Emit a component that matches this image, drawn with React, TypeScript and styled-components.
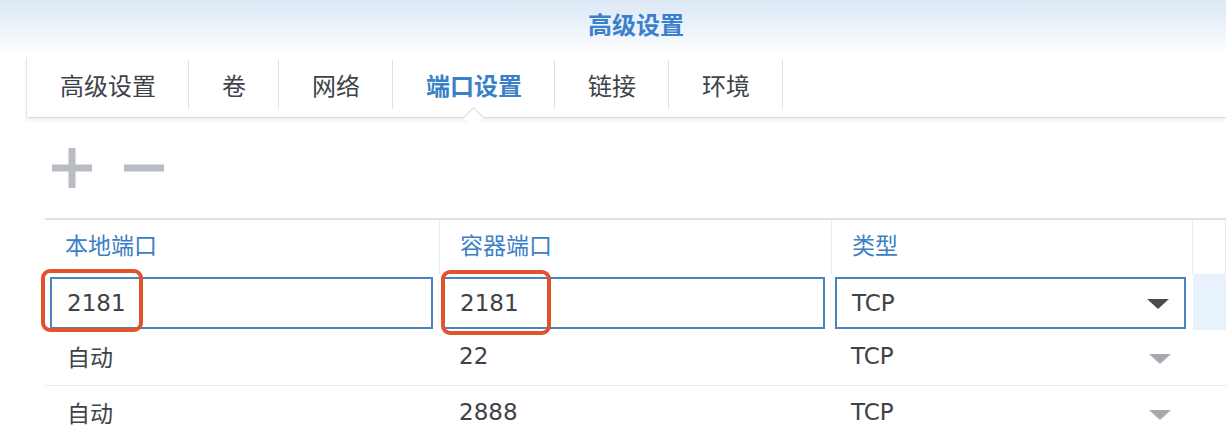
import styled, { createGlobalStyle } from "styled-components";

const GlobalStyle = createGlobalStyle`
  html, body {
    margin: 0;
    padding: 0;
    background: #ffffff;
    overflow: hidden;
  }
  body {
    font-family: "DejaVu Sans", "Noto Sans CJK SC", sans-serif;
    color: #3e4349;
  }
`;

const tabs = ["高级设置", "卷", "网络", "端口设置", "链接", "环境"];

const rows = [
  { local: "自动", container: "22", type: "TCP" },
  { local: "自动", container: "2888", type: "TCP" },
];

const App = () => {
  return (
    <>
      <GlobalStyle />
      <Window>
        <TitleBar>
          <Title>高级设置</Title>
        </TitleBar>

        <Content>
          <TabBar>
            {tabs.map((t) => (
              <Tab key={t} $active={t === "端口设置"}>
                {t}
              </Tab>
            ))}
          </TabBar>

          <Toolbar>
            <ToolButton aria-label="add">
              <svg width="40" height="40" viewBox="0 0 40 40">
                <rect x="0" y="16.5" width="40" height="7" fill="#b8bdc3" />
                <rect x="16.5" y="0" width="7" height="40" fill="#b8bdc3" />
              </svg>
            </ToolButton>
            <ToolButton aria-label="remove">
              <svg width="40" height="40" viewBox="0 0 40 40">
                <rect x="0" y="16.5" width="40" height="7" fill="#b8bdc3" />
              </svg>
            </ToolButton>
          </Toolbar>

          <Table>
            <HeadCell>本地端口</HeadCell>
            <HeadCell>容器端口</HeadCell>
            <HeadCell>类型</HeadCell>
            <HeadCell />

            <EditCell $first>
              <Field>2181</Field>
              <Mark style={{ left: -4, top: -5, width: 102, height: 63 }} />
            </EditCell>
            <EditCell>
              <Field>2181</Field>
              <Mark style={{ left: 1, top: -4, width: 110, height: 65 }} />
            </EditCell>
            <EditCell>
              <Field>
                TCP
                <Arrow $dark />
              </Field>
            </EditCell>
            <SelectedRest />

            {rows.map((r, i) => (
              <Row key={i}>
                <Cell $pad={22}>{r.local}</Cell>
                <Cell $pad={19}>{r.container}</Cell>
                <Cell $pad={19}>
                  {r.type}
                  <Arrow />
                </Cell>
                <Cell $pad={0} />
              </Row>
            ))}
          </Table>
        </Content>
      </Window>
    </>
  );
};

export default App;

const Window = styled.div`
  width: 1226px;
  height: 436px;
  overflow: hidden;
  background: #ffffff;
`;

const TitleBar = styled.div`
  height: 57px;
  display: flex;
  justify-content: center;
  align-items: flex-start;
  padding-left: 46px;
  box-sizing: border-box;
  background: linear-gradient(#dce8f6 0%, #ecf3fa 50%, #fcfdfe 90%, #ffffff 100%);
`;

const Title = styled.div`
  margin-top: 9px;
  font-size: 24px;
  line-height: 34px;
  font-weight: 700;
  color: #3a80cc;
`;

const Content = styled.div`
  padding-left: 26px;
`;

const TabBar = styled.div`
  display: flex;
  height: 61px;
  align-items: stretch;
  background: #ffffff;
  border-left: 1px solid #dfe3e8;
  border-bottom: 1px solid #d9dde2;
  box-shadow: 0 3px 4px rgba(0, 0, 0, 0.06);
  box-sizing: border-box;
`;

const Tab = styled.div<{ $active?: boolean }>`
  position: relative;
  display: flex;
  align-items: center;
  padding: 0 33px 6px;
  font-size: 24px;
  color: ${(p) => (p.$active ? "#3a7fc8" : "#3e4349")};
  font-weight: ${(p) => (p.$active ? 700 : 400)};

  &::before {
    content: "";
    position: absolute;
    right: 0;
    top: 3px;
    bottom: 8px;
    width: 1px;
    background: #dde1e6;
  }

  &::after {
    content: "";
    display: ${(p) => (p.$active ? "block" : "none")};
    position: absolute;
    left: 50%;
    bottom: -8px;
    width: 14px;
    height: 14px;
    margin-left: -8px;
    background: #ffffff;
    border-top: 1px solid #d4d8dd;
    border-left: 1px solid #d4d8dd;
    transform: rotate(45deg);
  }
`;

const Toolbar = styled.div`
  display: flex;
  gap: 32px;
  align-items: center;
  height: 100px;
  padding-left: 26px;
`;

const ToolButton = styled.div`
  width: 40px;
  height: 40px;
  display: flex;
`;

const Table = styled.div`
  margin-left: 19px;
  display: grid;
  grid-template-columns: 395px 392px 361px 1fr;
  grid-template-rows: 54px 56px 56px 56px;
  border-top: 2px solid #dbe3eb;
`;

const HeadCell = styled.div`
  display: flex;
  align-items: center;
  padding: 0 0 6px 20px;
  font-size: 23px;
  color: #3b80c6;
  border-right: 1px solid #e7ebef;
`;

const EditCell = styled.div<{ $first?: boolean }>`
  position: relative;
  display: flex;
  padding: ${(p) => (p.$first ? "3px 7px 1px 5px" : "3px 7px 1px 3px")};
`;

const Field = styled.div`
  flex: 1;
  display: flex;
  align-items: center;
  position: relative;
  padding-left: 15px;
  font-size: 23px;
  color: #3e4349;
  border: 2px solid #4a84c0;
  background: #ffffff;
`;

const SelectedRest = styled.div`
  background: #e8f2fc;
`;

const Mark = styled.div`
  position: absolute;
  box-sizing: border-box;
  border: 4px solid #e2532d;
  border-radius: 9px;
  pointer-events: none;
`;

const Row = styled.div`
  display: contents;
`;

const Cell = styled.div<{ $pad: number }>`
  position: relative;
  display: flex;
  align-items: center;
  padding: 0 0 3px ${(p) => p.$pad}px;
  font-size: 23px;
  color: #3e4349;
  border-bottom: 1px solid #e8ebee;
`;

const Arrow = styled.span<{ $dark?: boolean }>`
  position: absolute;
  right: ${(p) => (p.$dark ? "15px" : "22px")};
  top: 50%;
  margin-top: -4px;
  width: 0;
  height: 0;
  border-left: 11px solid transparent;
  border-right: 11px solid transparent;
  border-top: 10px solid ${(p) => (p.$dark ? "#484b50" : "#a6aaaf")};
`;
